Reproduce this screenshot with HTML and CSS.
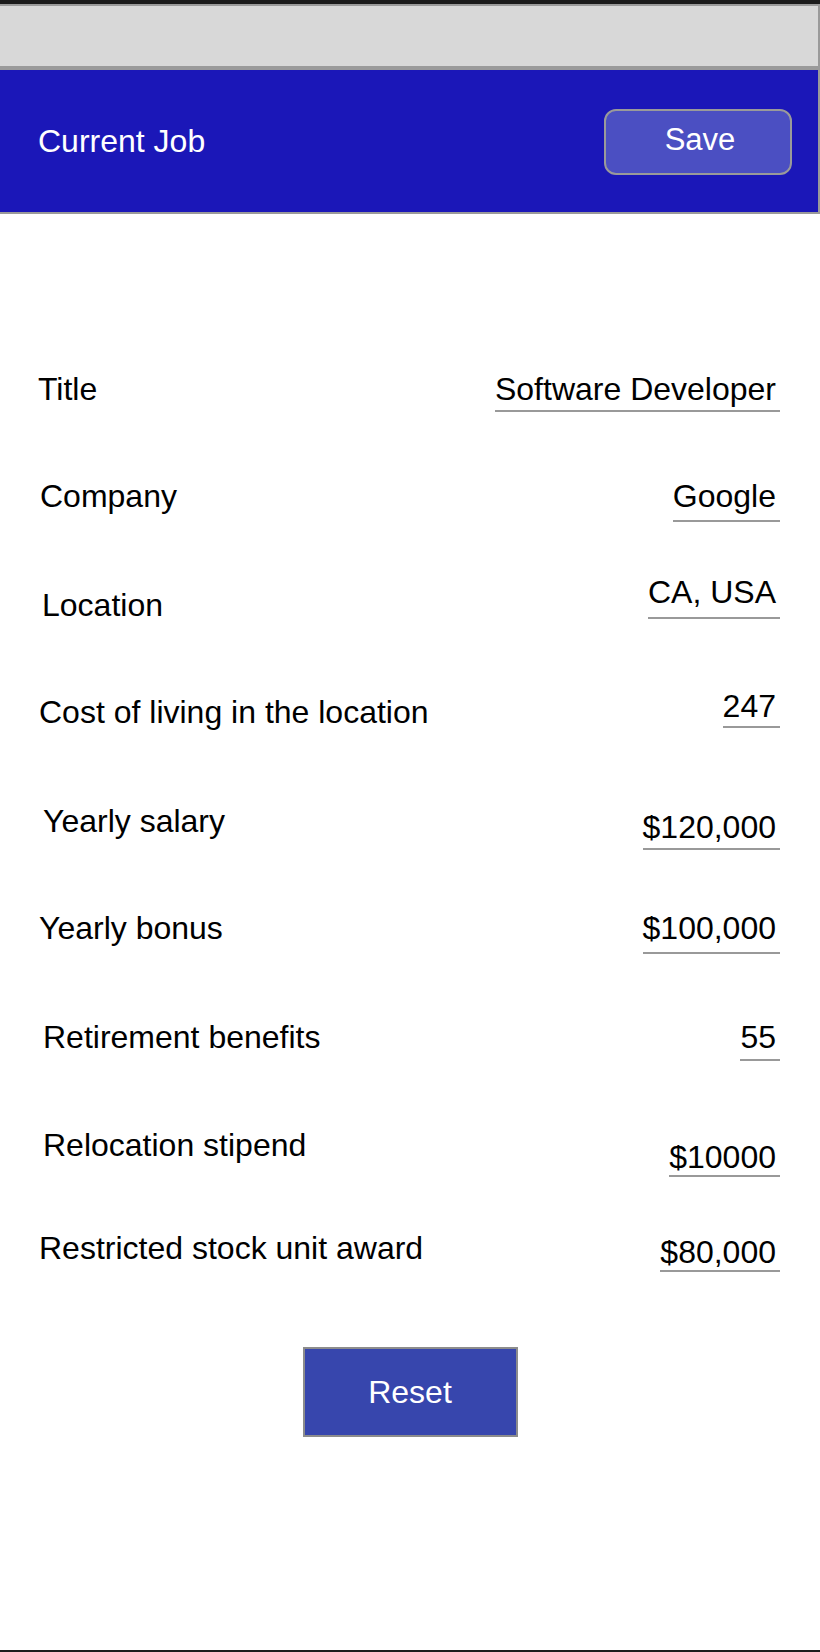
FILE: index.html
```html
<!DOCTYPE html>
<html lang="en">
<head>
<meta charset="utf-8">
<title>Current Job</title>
<link rel="stylesheet" href="styles.css">
</head>
<body>
<div class="screen">
  <div class="status-strip"></div>
  <div class="navbar"></div>
  <header class="header">
    <h1 class="header-title">Current Job</h1>
    <button class="btn-save" type="button">Save</button>
  </header>
  <main class="form">
    <div class="row row-title"><span class="label">Title</span><span class="value">Software Developer</span></div>
    <div class="row row-company"><span class="label">Company</span><span class="value">Google</span></div>
    <div class="row row-location"><span class="label">Location</span><span class="value">CA, USA</span></div>
    <div class="row row-cost"><span class="label">Cost of living in the location</span><span class="value">247</span></div>
    <div class="row row-salary"><span class="label">Yearly salary</span><span class="value">$120,000</span></div>
    <div class="row row-bonus"><span class="label">Yearly bonus</span><span class="value">$100,000</span></div>
    <div class="row row-retirement"><span class="label">Retirement benefits</span><span class="value">55</span></div>
    <div class="row row-relocation"><span class="label">Relocation stipend</span><span class="value">$10000</span></div>
    <div class="row row-rsu"><span class="label">Restricted stock unit award</span><span class="value">$80,000</span></div>
    <div class="actions"><button class="btn-reset" type="button">Reset</button></div>
  </main>
  <div class="home-strip"></div>
</div>
</body>
</html>
```
FILE: styles.css
```css
* { box-sizing: border-box; }

html, body {
  margin: 0;
  padding: 0;
  background: #ffffff;
}

body {
  font-family: "Liberation Sans", Arial, Helvetica, sans-serif;
  color: #000000;
}

.screen {
  width: 820px;
  min-height: 1652px;
  display: flex;
  flex-direction: column;
  background: #ffffff;
}

.status-strip {
  height: 4px;
  background: #1b1b1b;
}

.navbar {
  height: 64px;
  background: #d8d8d8;
  border-top: 2px solid #9a9a9a;
  border-right: 2px solid #9a9a9a;
  border-bottom: 2px solid #9a9a9a;
}

.header {
  height: 146px;
  background: #1b17b8;
  border-top: 2px solid #9a9a9a;
  border-right: 2px solid #9a9a9a;
  border-bottom: 2px solid #9a9a9a;
  display: flex;
  align-items: center;
  justify-content: space-between;
  padding: 0 26px 0 38px;
}

.header-title {
  margin: 0;
  font-size: 32px;
  font-weight: normal;
  line-height: 36px;
  color: #ffffff;
}

.btn-save {
  width: 188px;
  height: 66px;
  margin-top: 2px;
  background: #4b4fc2;
  border: 2px solid #9a9a9a;
  border-radius: 12px;
  color: #ffffff;
  font-family: inherit;
  font-size: 31px;
  line-height: 36px;
  padding: 0 0 4px 4px;
}

.form {
  padding-top: 157px;
  display: flex;
  flex-direction: column;
}

.row {
  height: 107px;
  display: flex;
  justify-content: space-between;
  align-items: flex-start;
  padding-left: 38px;
  padding-right: 40px;
  font-size: 32px;
  line-height: 36px;
}

.label {
  white-space: nowrap;
}

.value {
  white-space: nowrap;
  padding: 0 4px 3px 0;
  border-bottom: 2px solid #999999;
}

.row-title .value { padding-bottom: 3px; }

.row-company .label { margin-left: 2px; }
.row-company .value { padding-bottom: 6px; }

.row-location .label { margin-top: 2px; margin-left: 4px; }
.row-location .value { margin-top: -11px; padding-bottom: 7px; }

.row-cost .label { margin-top: 2px; margin-left: 1px; }
.row-cost .value { margin-top: -4px; padding-bottom: 2px; }

.row-salary .label { margin-top: 4px; margin-left: 5px; }
.row-salary .value { margin-top: 10px; padding-bottom: 3px; }

.row-bonus .label { margin-top: 4px; margin-left: 1px; }
.row-bonus .value { margin-top: 4px; padding-bottom: 6px; }

.row-retirement .label { margin-top: 6px; margin-left: 5px; }
.row-retirement .value { margin-top: 6px; padding-bottom: 4px; }

.row-relocation .label { margin-top: 7px; margin-left: 5px; }
.row-relocation .value { margin-top: 19px; padding-bottom: 0; }

.row-rsu .label { margin-top: 3px; margin-left: 1px; }
.row-rsu .value { margin-top: 7px; padding-bottom: 0; }

.actions {
  display: flex;
  justify-content: center;
  margin-top: 13px;
}

.btn-reset {
  width: 215px;
  height: 90px;
  background: #3746ad;
  border: 2px solid #8c8c8c;
  border-radius: 0;
  color: #ffffff;
  font-family: inherit;
  font-size: 32px;
  line-height: 36px;
  padding: 0;
}

.home-strip {
  margin-top: auto;
  height: 2px;
  background: #1b1b1b;
}
```
